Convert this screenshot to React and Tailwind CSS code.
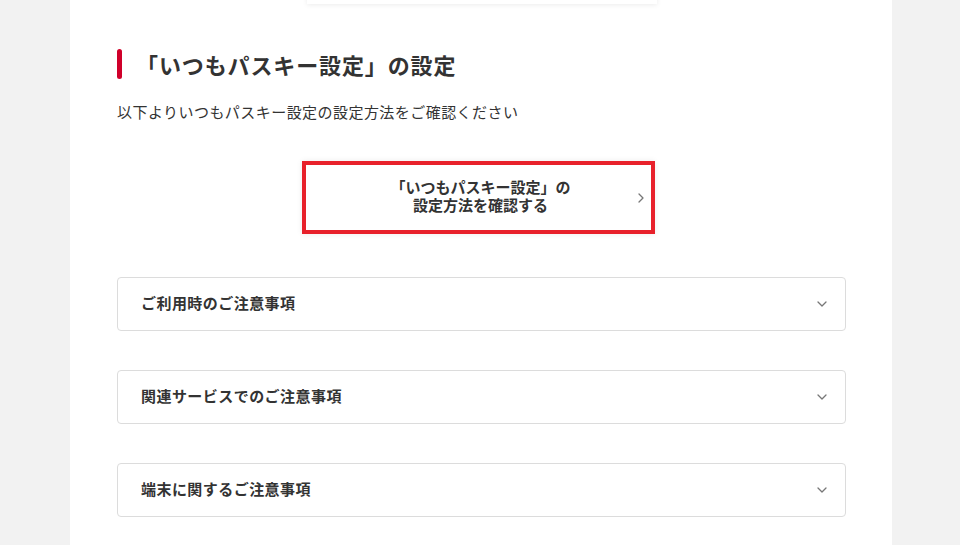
import React from "react";

const font = { fontFamily: '"Noto Sans CJK JP", "Noto Sans", sans-serif' };

function Chevron({ dir = "down", className = "" }) {
  return (
    <svg
      className={className}
      viewBox="0 0 12 12"
      fill="none"
      stroke="currentColor"
      strokeWidth="1.3"
      strokeLinecap="round"
      strokeLinejoin="round"
    >
      {dir === "down" ? <path d="M2 4 L6 8 L10 4" /> : <path d="M4 2 L8 6 L4 10" />}
    </svg>
  );
}

function Accordion({ title }) {
  return (
    <div className="flex h-[54px] items-center justify-between rounded-[4px] border border-[#dcdcdc] bg-white pb-[2px] pl-[23px] pr-[17px]">
      <span className="text-[15px] font-bold tracking-[0.03em] text-[#333]">{title}</span>
      <Chevron className="mt-[2px] h-[12px] w-[12px] text-[#777]" />
    </div>
  );
}

export default function App() {
  return (
    <div className="min-h-[545px] w-full bg-[#f2f2f2]" style={font}>
      <div className="mx-[70px] min-h-[545px] w-[822px] overflow-hidden bg-white">
        <div className="ml-[237px] -mt-[20px] h-[24px] w-[350px] bg-white shadow-[0_1px_5px_rgba(0,0,0,0.08)]" />
        <div className="pl-[47px] pr-[46px] pt-[45px]">
          <div className="flex items-center">
            <div className="h-[30px] w-[5px] rounded-full bg-[#d0002a]" />
            <h2 className="ml-[14px] text-[22px] font-bold leading-[30px] tracking-[0.04em] text-[#333]">
              「いつもパスキー設定」の設定
            </h2>
          </div>
          <p className="mt-[22px] text-[15px] leading-[22px] tracking-[0.03em] text-[#333]">
            以下よりいつもパスキー設定の設定方法をご確認ください
          </p>
          <div className="ml-[185px] mt-[38px] w-[353px] border-[4px] border-[#e8212b] bg-white shadow-[0_0_6px_rgba(0,0,0,0.08)]">
            <div className="flex h-[65px] items-center justify-center pl-[6px] pr-[4px]">
              <div className="mb-[3px] flex-1 text-center text-[15px] font-bold leading-[18px] text-[#333]">
                <div className="pl-[14px]">「いつもパスキー設定」の</div>
                <div className="pl-[14px]">設定方法を確認する</div>
              </div>
              <Chevron dir="right" className="h-[12px] w-[12px] text-[#777]" />
            </div>
          </div>
          <div className="mt-[43px] flex flex-col gap-[39px]">
            <Accordion title="ご利用時のご注意事項" />
            <Accordion title="関連サービスでのご注意事項" />
            <Accordion title="端末に関するご注意事項" />
          </div>
        </div>
      </div>
    </div>
  );
}
